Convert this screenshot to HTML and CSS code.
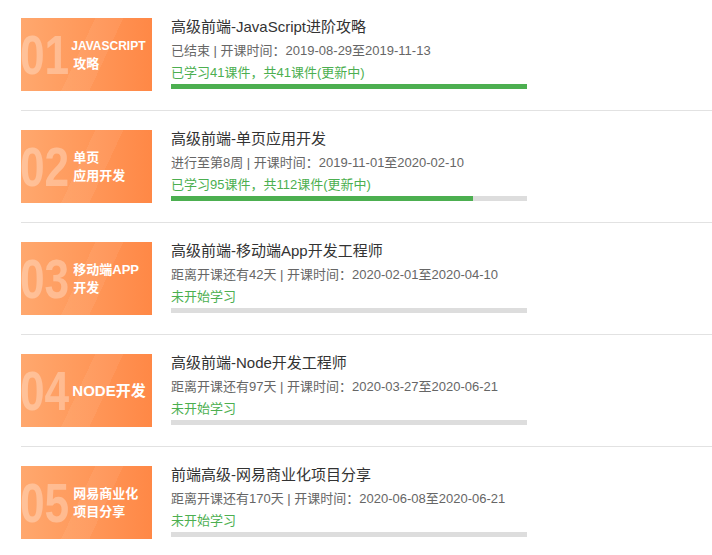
FILE: index.html
```html
<!DOCTYPE html>
<html lang="zh-CN">
<head>
  <meta charset="UTF-8">
  <meta name="viewport" content="width=device-width, initial-scale=1.0">
  <title>我的课程</title>
  <link rel="stylesheet" href="styles.css">
</head>
<body>
  <ul class="course-list">
    <li class="course-item">
      <div class="course-cover">
        <span class="cover-num">01</span>
        <span class="cover-label"><span class="cover-label-latin">JAVASCRIPT</span><br>攻略</span>
      </div>
      <div class="course-info">
        <h3 class="course-title">高级前端-JavaScript进阶攻略</h3>
        <p class="course-meta">已结束 | 开课时间：2019-08-29至2019-11-13</p>
        <p class="course-progress">已学习41课件，共41课件(更新中)</p>
        <div class="progress-bar"><div class="progress-fill" style="width: 100%"></div></div>
      </div>
    </li>
    <li class="course-item">
      <div class="course-cover">
        <span class="cover-num">02</span>
        <span class="cover-label">单页<br>应用开发</span>
      </div>
      <div class="course-info">
        <h3 class="course-title">高级前端-单页应用开发</h3>
        <p class="course-meta">进行至第8周 | 开课时间：2019-11-01至2020-02-10</p>
        <p class="course-progress">已学习95课件，共112课件(更新中)</p>
        <div class="progress-bar"><div class="progress-fill" style="width: 84.8%"></div></div>
      </div>
    </li>
    <li class="course-item">
      <div class="course-cover">
        <span class="cover-num">03</span>
        <span class="cover-label">移动端APP<br>开发</span>
      </div>
      <div class="course-info">
        <h3 class="course-title">高级前端-移动端App开发工程师</h3>
        <p class="course-meta">距离开课还有42天 | 开课时间：2020-02-01至2020-04-10</p>
        <p class="course-progress">未开始学习</p>
        <div class="progress-bar"><div class="progress-fill" style="width: 0%"></div></div>
      </div>
    </li>
    <li class="course-item">
      <div class="course-cover">
        <span class="cover-num">04</span>
        <span class="cover-label cover-label-big">NODE开发</span>
      </div>
      <div class="course-info">
        <h3 class="course-title">高级前端-Node开发工程师</h3>
        <p class="course-meta">距离开课还有97天 | 开课时间：2020-03-27至2020-06-21</p>
        <p class="course-progress">未开始学习</p>
        <div class="progress-bar"><div class="progress-fill" style="width: 0%"></div></div>
      </div>
    </li>
    <li class="course-item">
      <div class="course-cover">
        <span class="cover-num">05</span>
        <span class="cover-label">网易商业化<br>项目分享</span>
      </div>
      <div class="course-info">
        <h3 class="course-title">前端高级-网易商业化项目分享</h3>
        <p class="course-meta">距离开课还有170天 | 开课时间：2020-06-08至2020-06-21</p>
        <p class="course-progress">未开始学习</p>
        <div class="progress-bar"><div class="progress-fill" style="width: 0%"></div></div>
      </div>
    </li>
  </ul>
</body>
</html>
```

FILE: styles.css
```css
body {
  font-family: "Liberation Sans", "Noto Sans CJK SC", sans-serif;
  background-color: #fff;
  margin: 0;
  padding: 0;
  overflow: hidden;
}
.course-list {
  list-style: none;
  margin: -1px 0 0 21px;
  padding: 0;
}
.course-item {
  display: flex;
  padding: 19px 0;
  border-bottom: 1px solid #e2e2e2;
}
.course-cover {
  width: 131px;
  height: 73px;
  flex-shrink: 0;
  display: flex;
  align-items: center;
  background:
    linear-gradient(115deg, rgba(255, 255, 255, 0) 45%, rgba(255, 255, 255, 0.06) 45%, rgba(255, 255, 255, 0.06) 62%, rgba(255, 255, 255, 0) 62%),
    linear-gradient(90deg, #ffa86e, #ff8846);
}
.cover-num {
  flex-shrink: 0;
  margin-left: -1px;
  margin-right: -12px;
  font-size: 56px;
  font-weight: bold;
  line-height: 1;
  color: rgba(255, 255, 255, 0.3);
  transform: scaleX(0.79);
  transform-origin: left center;
  white-space: nowrap;
}
.cover-label {
  margin-left: 3px;
  color: #fff;
  font-size: 13px;
  font-weight: bold;
  line-height: 18px;
  white-space: nowrap;
}
.cover-label-latin {
  margin-left: -2px;
  font-size: 12px;
}
.cover-label-big {
  margin-left: 2px;
  font-size: 15px;
}
.course-info {
  margin-left: 19px;
  width: 356px;
}
.course-title {
  margin: -1px 0 0;
  font-size: 15px;
  font-weight: normal;
  line-height: 20px;
  color: #333;
  white-space: nowrap;
}
.course-meta {
  margin: 4px 0 0;
  font-size: 13px;
  line-height: 20px;
  color: #666;
  white-space: nowrap;
}
.course-progress {
  margin: 2px 0 0;
  font-size: 13px;
  line-height: 20px;
  color: #4caf50;
  white-space: nowrap;
}
.progress-bar {
  margin-top: 1px;
  height: 5px;
  background-color: #ddd;
}
.progress-fill {
  height: 100%;
  background-color: #4caf50;
}
```
